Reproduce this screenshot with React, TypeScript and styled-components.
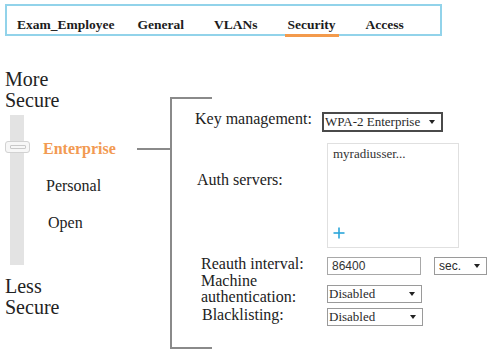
import React from 'react';
import styled, { createGlobalStyle } from 'styled-components';

const Global = createGlobalStyle`
  * { box-sizing: border-box; }
  html, body { margin: 0; padding: 0; background: #ffffff; }
  body { font-family: "Liberation Serif", "Times New Roman", serif; color: #1e1e1e; }
`;

const Page = styled.div`
  width: 499px;
  height: 357px;
  overflow: hidden;
  padding-top: 4px;
  font-family: "Liberation Serif", "Times New Roman", serif;
`;

const TabBar = styled.nav`
  margin-left: 5px;
  width: 437px;
  height: 32px;
  border: 2px solid #92d3ea;
  display: flex;
  align-items: flex-end;
  padding-left: 7px;
  gap: 24px;
`;

const Tab = styled.div<{ $active?: boolean }>`
  font-weight: bold;
  font-size: 13.5px;
  line-height: 18px;
  padding: 0 3px;
  margin-bottom: -3px;
  color: #1c1c1c;
  border-bottom: 3px solid ${(p) => (p.$active ? '#f39a4c' : 'transparent')};
  &:first-child { margin-right: -7px; }
`;

const Main = styled.div`
  display: flex;
  align-items: flex-start;
  margin-top: 33px;
`;

const LeftColumn = styled.div`
  width: 137px;
  flex-shrink: 0;
  padding-left: 5px;
  display: flex;
  flex-direction: column;
`;

const SecureLabel = styled.div<{ $mt?: number }>`
  font-size: 20px;
  line-height: 21px;
  color: #222;
  margin-top: ${(p) => p.$mt ?? 0}px;
`;

const Slider = styled.div`
  display: flex;
  margin-top: 4px;
  height: 150px;
`;

const Track = styled.div`
  position: relative;
  width: 14px;
  height: 150px;
  margin-left: 5px;
  flex-shrink: 0;
  background: #e3e3e3;
`;

const Handle = styled.div`
  position: absolute;
  left: -5px;
  top: 26px;
  width: 25px;
  height: 12px;
  border: 1px solid #d2d2d2;
  border-radius: 3px;
  background: #f7f7f7;
  display: flex;
  align-items: center;
  justify-content: center;
`;

const Grip = styled.div`
  width: 16px;
  height: 4px;
  border: 1px solid #c9c9c9;
  border-radius: 1px;
`;

const Options = styled.div`
  display: flex;
  flex-direction: column;
  padding-top: 24px;
  gap: 17px;
  margin-left: 19px;
`;

const Option = styled.div<{ $active?: boolean; $indent?: number }>`
  font-size: 16px;
  line-height: 20px;
  padding-left: ${(p) => p.$indent ?? 0}px;
  font-weight: ${(p) => (p.$active ? 'bold' : 'normal')};
  color: ${(p) => (p.$active ? '#f29a52' : '#222')};
`;

const Connector = styled.div`
  width: 33px;
  height: 2px;
  margin-top: 79px;
  flex-shrink: 0;
  background: #8a8a8a;
`;

const Bracket = styled.div`
  margin-top: 28px;
  border-left: 2px solid #8a8a8a;
  display: flex;
  flex-direction: column;
`;

const Cap = styled.div`
  width: 40px;
  height: 0;
  border-top: 2px solid #8a8a8a;
`;

const Form = styled.div`
  display: flex;
  flex-direction: column;
  padding: 13px 0 21px 23px;
`;

const Row = styled.div<{ $mt?: number }>`
  display: flex;
  align-items: flex-start;
  margin-top: ${(p) => p.$mt ?? 0}px;
`;

const FieldLabel = styled.div<{ $top?: number; $indent?: number; $lh?: number }>`
  width: 127px;
  flex-shrink: 0;
  font-size: 16px;
  line-height: ${(p) => p.$lh ?? 18}px;
  margin-top: ${(p) => p.$top ?? 0}px;
  padding-left: ${(p) => p.$indent ?? 0}px;
  color: #222;
`;

const SelectBox = styled.div<{ $w: number; $h: number; $ml?: number; $dark?: boolean; $sans?: boolean }>`
  width: ${(p) => p.$w}px;
  height: ${(p) => p.$h}px;
  margin-left: ${(p) => p.$ml ?? 0}px;
  border: ${(p) => (p.$dark ? '2px solid #4a4a4a' : '1px solid #9a9a9a')};
  display: flex;
  align-items: center;
  justify-content: space-between;
  padding: 0 6px 0 ${(p) => (p.$sans ? 4 : 1)}px;
  font-family: ${(p) => (p.$sans ? '"Liberation Sans", Arial, sans-serif' : '"Liberation Serif", "Times New Roman", serif')};
  font-size: ${(p) => (p.$sans ? 12 : 13)}px;
  color: #2a2a2a;
  background: #fff;
`;

const TextInput = styled.div<{ $w: number; $ml?: number }>`
  width: ${(p) => p.$w}px;
  height: 18px;
  margin-left: ${(p) => p.$ml ?? 0}px;
  border: 1px solid #a8a8a8;
  display: flex;
  align-items: center;
  padding-left: 4px;
  font-family: "Liberation Sans", Arial, sans-serif;
  font-size: 12px;
  color: #333;
`;

const ServerList = styled.div`
  width: 132px;
  height: 105px;
  margin-left: 5px;
  border: 1px solid #e0e0e0;
  display: flex;
  flex-direction: column;
  justify-content: space-between;
  padding: 2px 5px 8px 5px;
`;

const ServerItem = styled.div`
  font-size: 13px;
  line-height: 15px;
  color: #333;
`;

const AddButton = styled.div`
  width: 12px;
  height: 12px;
  display: flex;
`;

const Arrow = () => (
  <svg width="6" height="4" viewBox="0 0 6 4">
    <polygon points="0,0 6,0 3,4" fill="#222" />
  </svg>
);

const Plus = () => (
  <svg width="12" height="12" viewBox="0 0 12 12">
    <line x1="6" y1="0.5" x2="6" y2="11.5" stroke="#2aa6da" strokeWidth="1.6" />
    <line x1="0.5" y1="6" x2="11.5" y2="6" stroke="#2aa6da" strokeWidth="1.6" />
  </svg>
);

export default function App() {
  return (
    <Page>
      <Global />
      <TabBar>
        <Tab>Exam_Employee</Tab>
        <Tab>General</Tab>
        <Tab>VLANs</Tab>
        <Tab $active>Security</Tab>
        <Tab>Access</Tab>
      </TabBar>
      <Main>
        <LeftColumn>
          <SecureLabel>More<br />Secure</SecureLabel>
          <Slider>
            <Track>
              <Handle><Grip /></Handle>
            </Track>
            <Options>
              <Option $active>Enterprise</Option>
              <Option $indent={3}>Personal</Option>
              <Option $indent={5}>Open</Option>
            </Options>
          </Slider>
          <SecureLabel $mt={11}>Less<br />Secure</SecureLabel>
        </LeftColumn>
        <Connector />
        <Bracket>
          <Cap />
          <Form>
            <Row>
              <FieldLabel $top={-2}>Key management:</FieldLabel>
              <SelectBox $w={121} $h={20} $dark>
                <span>WPA-2 Enterprise</span>
                <Arrow />
              </SelectBox>
            </Row>
            <Row $mt={11}>
              <FieldLabel $top={28} $indent={2}>Auth servers:</FieldLabel>
              <ServerList>
                <ServerItem>myradiusser...</ServerItem>
                <AddButton><Plus /></AddButton>
              </ServerList>
            </Row>
            <Row $mt={9}>
              <FieldLabel $top={-2} $indent={6}>Reauth interval:</FieldLabel>
              <TextInput $w={94} $ml={5}>86400</TextInput>
              <SelectBox $w={53} $h={18} $ml={13} $sans>
                <span>sec.</span>
                <Arrow />
              </SelectBox>
            </Row>
            <Row $mt={10}>
              <FieldLabel $top={-12} $indent={6} $lh={16}>Machine<br />authentication:</FieldLabel>
              <SelectBox $w={95} $h={18} $ml={5}>
                <span>Disabled</span>
                <Arrow />
              </SelectBox>
            </Row>
            <Row $mt={3}>
              <FieldLabel $top={-2} $indent={7}>Blacklisting:</FieldLabel>
              <SelectBox $w={96} $h={18} $ml={5}>
                <span>Disabled</span>
                <Arrow />
              </SelectBox>
            </Row>
          </Form>
          <Cap />
        </Bracket>
      </Main>
    </Page>
  );
}
